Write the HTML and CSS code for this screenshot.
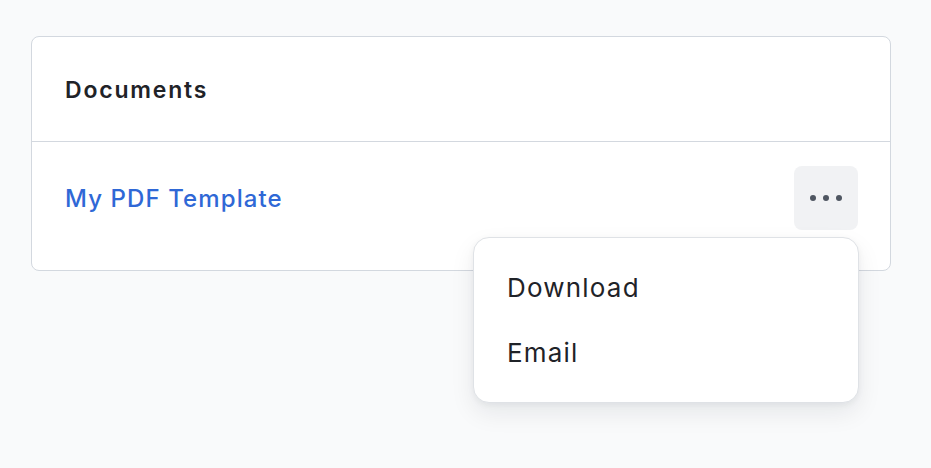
FILE: index.html
```html
<!DOCTYPE html>
<html lang="en">
<head>
<meta charset="utf-8">
<title>Documents</title>
<link rel="stylesheet" href="styles.css">
</head>
<body>
<div class="page">
  <section class="card">
    <header class="card-header">
      <h2 class="card-title">Documents</h2>
    </header>
    <div class="doc-row">
      <a class="doc-link" href="#">My PDF Template</a>
      <div class="menu-wrap">
        <button class="menu-btn" type="button" aria-label="More actions">
          <span class="dot"></span><span class="dot"></span><span class="dot"></span>
        </button>
        <ul class="menu">
          <li class="menu-item">Download</li>
          <li class="menu-item">Email</li>
        </ul>
      </div>
    </div>
  </section>
</div>
</body>
</html>
```

FILE: styles.css
```css
* { box-sizing: border-box; }
html, body {
  margin: 0;
  min-height: 100%;
  background: #f9fafb;
  font-family: Inter, "Noto Sans", sans-serif;
  color: #1f2328;
}
body {
  min-height: 100vh;
}
.page {
  padding: 36px 40px 0 31px;
}
.card {
  background: #fff;
  border: 1px solid #d3d8df;
  border-radius: 8px;
}
.card-header {
  height: 105px;
  display: flex;
  align-items: center;
  padding: 2px 33px 0;
  border-bottom: 1px solid #d3d8df;
}
.card-title {
  margin: 0;
  font-size: 23px;
  font-weight: 600;
  letter-spacing: 1.8px;
  color: #1f2328;
}
.doc-row {
  display: flex;
  align-items: center;
  justify-content: space-between;
  padding: 24px 32px 40px 33px;
}
.doc-link {
  font-size: 24px;
  font-weight: 500;
  letter-spacing: 1.1px;
  color: #2f68d6;
  text-decoration: none;
}
.menu-wrap {
  position: relative;
}
.menu-btn {
  width: 64px;
  height: 64px;
  border: 0;
  border-radius: 8px;
  background: #f1f2f4;
  display: flex;
  align-items: center;
  justify-content: center;
  gap: 7px;
  padding: 0;
}
.dot {
  width: 6px;
  height: 6px;
  border-radius: 50%;
  background: #4f5661;
}
.menu {
  position: absolute;
  z-index: 10;
  top: 71px;
  right: -1px;
  width: 386px;
  margin: 0;
  padding: 17px 0;
  list-style: none;
  background: #fff;
  border: 1px solid #dfe2e6;
  border-radius: 16px;
  box-shadow: 0 10px 24px rgba(17, 24, 39, 0.08), 0 2px 6px rgba(17, 24, 39, 0.05);
}
.menu-item {
  height: 65px;
  display: flex;
  align-items: center;
  padding: 0 33px;
  font-size: 26px;
  letter-spacing: 1.2px;
  color: #1f2328;
}
```
